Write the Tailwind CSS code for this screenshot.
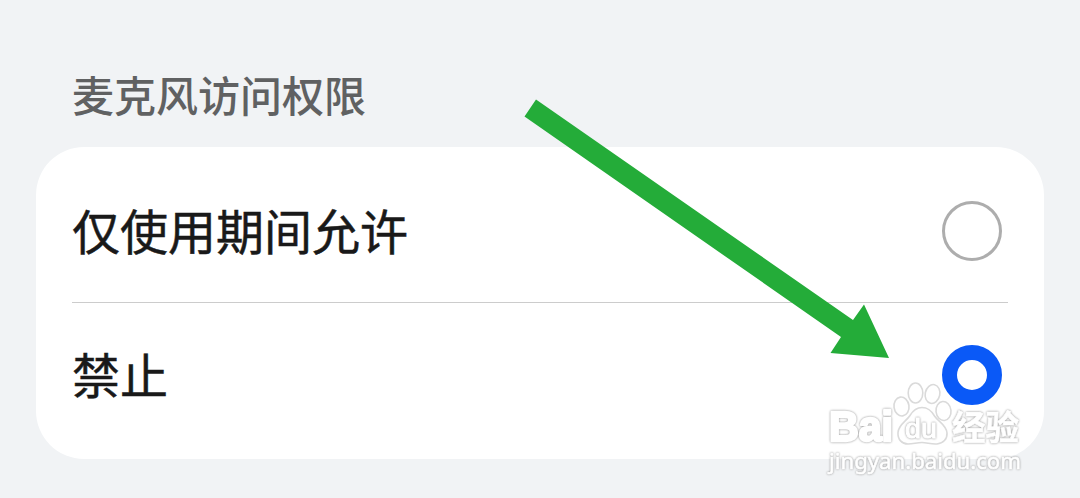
<!DOCTYPE html>
<html lang="zh-CN">
<head>
    <meta charset="UTF-8">
    <meta name="viewport" content="width=device-width, initial-scale=1.0">
    <title>麦克风访问权限</title>
    <script src="https://cdn.jsdelivr.net/npm/@tailwindcss/browser@4"></script>
</head>
<body class="relative h-[498px] overflow-hidden bg-[#f1f3f5] font-['Noto_Sans_CJK_SC',sans-serif]">

    <main class="px-9 pt-16">
        <h1 class="h-[83px] pl-9 text-[42px] leading-[60px] font-medium text-[#606162]">麦克风访问权限</h1>

        <div class="rounded-[48px] bg-white px-9 py-3">
            <label class="flex h-36 items-center justify-between pr-1.5">
                <span class="pb-1 text-[48px] leading-[60px] text-[#191919] [-webkit-text-stroke:0.5px_#191919]">仅使用期间允许</span>
                <span class="size-[60px] rounded-full border-3 border-[#adadad]"></span>
            </label>
            <div class="-mt-px h-px bg-[#cccccc]"></div>
            <label class="flex h-36 items-center justify-between pr-1.5">
                <span class="pb-1 text-[48px] leading-[60px] text-[#191919] [-webkit-text-stroke:0.5px_#191919]">禁止</span>
                <span class="size-[60px] rounded-full border-15 border-[#0a59f7]"></span>
            </label>
        </div>
    </main>

    <!-- arrow and watermark over the card -->
    <svg class="absolute top-0 left-0" width="1080" height="498" viewBox="0 0 1080 498">
        <polygon fill="#24ac39" points="536,99.5 853,320 864,304.5 889,358 830.5,353 841,337 524.5,116.5" />

        <g fill="#fff" stroke="#dadada" stroke-width="1.6" stroke-linejoin="round">
            <ellipse cx="901.5" cy="406.5" rx="7.5" ry="9.5" transform="rotate(-8 901.5 406.5)" />
            <ellipse cx="915.5" cy="393" rx="7.3" ry="10" />
            <ellipse cx="932.5" cy="394" rx="7.3" ry="9.5" transform="rotate(12 932.5 394)" />
            <ellipse cx="943.5" cy="411" rx="7.5" ry="9.5" transform="rotate(-6 943.5 411)" />
            <path d="M922 407.5c-6 0-9 3-12 8-4 6-11.500 9-12 17-.5 7 4 11.500 10 11.500 5 0 9-1.500 14-1.500s9 2 15 1.500c6-.5 10.500-5 10-11-.5-8-8.500-11-12.500-17-3-5-6-8.500-12.500-8.500z" />
        </g>

        <g class="drop-shadow-[0_0_1px_#909090]" fill="#fff" stroke="#fff" stroke-linejoin="round">
            <text x="829" y="441" textLength="64" lengthAdjust="spacingAndGlyphs" font-family="Liberation Sans, sans-serif" font-size="42" font-weight="700" stroke-width="2.6">Bai</text>
            <text x="905" y="437.5" textLength="32" lengthAdjust="spacingAndGlyphs" font-family="Liberation Sans, sans-serif" font-size="27" stroke-width="1">du</text>
            <text x="952" y="439.5" textLength="67" lengthAdjust="spacingAndGlyphs" font-family="Noto Sans CJK SC, sans-serif" font-size="34" font-weight="700" stroke-width=".6">经验</text>
            <text x="829" y="468.5" textLength="192" lengthAdjust="spacingAndGlyphs" font-family="Noto Sans, sans-serif" font-size="22" stroke-width=".6">jingyan.baidu.com</text>
        </g>
    </svg>

</body>
</html>
